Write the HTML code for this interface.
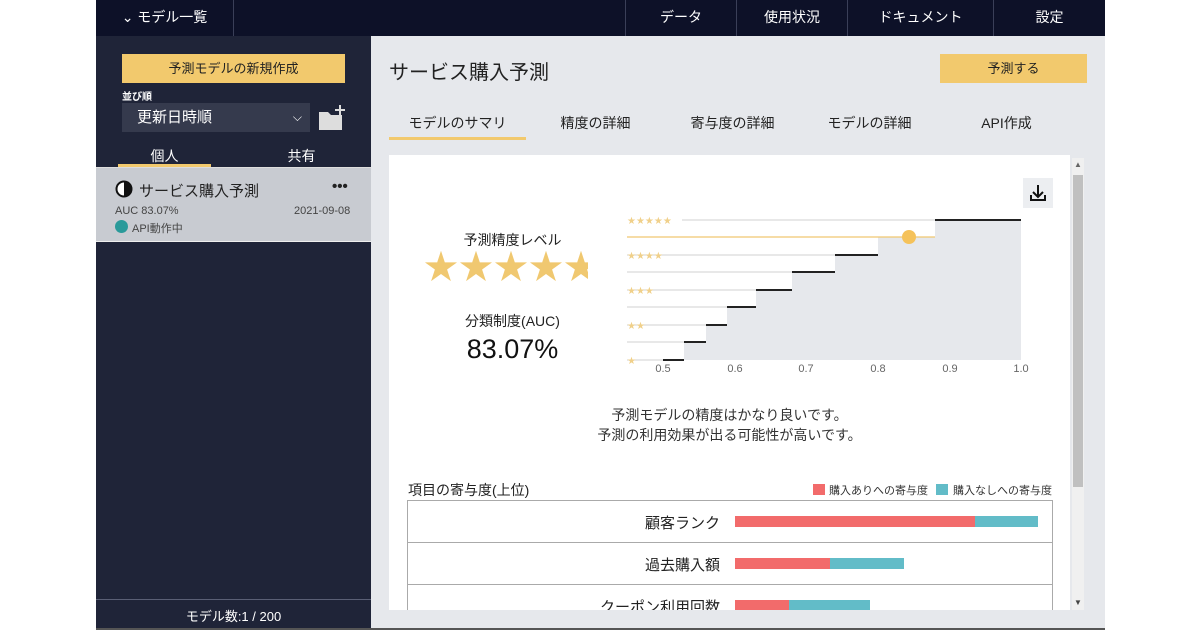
<!DOCTYPE html>
<html><head><meta charset="utf-8"><style>
*{margin:0;padding:0;box-sizing:border-box}
body{width:1200px;height:630px;background:#fff;font-family:"Liberation Sans","Noto Sans CJK JP",sans-serif;position:relative;overflow:hidden;color:#222}
.a{position:absolute}
.top{left:96px;top:0;width:1009px;height:36px;background:#0d1128}
.nav{top:0;height:36px;color:#fff;font-size:14px;line-height:34px;text-align:center;border-left:1px solid #3a3f58}
.side{left:96px;top:36px;width:275px;height:592px;background:#1f2438}
.main{left:371px;top:36px;width:734px;height:592px;background:#e6e8ec}
.btn{background:#f2c96d;color:#222;font-size:13px;text-align:center}
.tab{top:113px;font-size:14px;color:#222;text-align:center}
.card{left:389px;top:155px;width:681px;height:455px;background:#fff}
</style></head><body>
<div class="a top"></div>
<div class="a nav" style="left:96px;width:138px;border-left:none;border-right:1px solid #3a3f58;font-size:14px">⌄ モデル一覧</div>
<div class="a nav" style="left:625px;width:111px">データ</div>
<div class="a nav" style="left:736px;width:111px">使用状況</div>
<div class="a nav" style="left:847px;width:146px">ドキュメント</div>
<div class="a nav" style="left:993px;width:112px">設定</div>

<div class="a side"></div>
<div class="a btn" style="left:122px;top:54px;width:223px;height:29px;line-height:29px">予測モデルの新規作成</div>
<div class="a" style="left:122px;top:88px;color:#fff;font-size:10px;font-weight:bold">並び順</div>
<div class="a" style="left:122px;top:103px;width:188px;height:29px;background:#353a4d;color:#fff;font-size:15px;line-height:29px;padding-left:15px">更新日時順<span style="position:absolute;right:8px;top:0;font-size:12px">⌵</span></div>
<svg class="a" style="left:318px;top:104px" width="30" height="28"><path d="M1 8h9l3 3h11v15H1z" fill="#ddd"/><path d="M22 1v10M17 6h10" stroke="#ddd" stroke-width="2"/></svg>
<div class="a" style="left:118px;top:146px;width:93px;text-align:center;color:#fff;font-size:14px">個人</div>
<div class="a" style="left:118px;top:164px;width:93px;height:3px;background:#f2c96d"></div>
<div class="a" style="left:255px;top:146px;width:93px;text-align:center;color:#fff;font-size:14px">共有</div>
<div class="a" style="left:96px;top:167px;width:275px;height:75px;background:#c8cbd1;border-top:1px solid #ddd;border-bottom:1px solid #eee"></div>
<svg class="a" style="left:115px;top:180px" width="18" height="18"><circle cx="9" cy="9" r="7.5" fill="#fff" stroke="#111" stroke-width="2"/><path d="M9 1.5a7.5 7.5 0 0 1 0 15z" fill="#111"/></svg>
<div class="a" style="left:139px;top:180px;font-size:15px;color:#222">サービス購入予測</div>
<div class="a" style="left:332px;top:178px;font-size:15px;font-weight:bold;color:#222">•••</div>
<div class="a" style="left:115px;top:205px;font-size:11px;color:#444">AUC 83.07%</div>
<div class="a" style="left:294px;top:205px;font-size:11px;color:#444">2021-09-08</div>
<div class="a" style="left:115px;top:220px;width:13px;height:13px;border-radius:50%;background:#2a9a9a"></div>
<div class="a" style="left:132px;top:220px;font-size:11px;color:#444">API動作中</div>
<div class="a" style="left:96px;top:599px;width:275px;height:1px;background:#5a5f75"></div>
<div class="a" style="left:96px;top:606px;width:275px;text-align:center;color:#fff;font-size:13px">モデル数:1 / 200</div>

<div class="a main"></div>
<div class="a" style="left:389px;top:56px;font-size:20px;color:#222">サービス購入予測</div>
<div class="a btn" style="left:940px;top:54px;width:147px;height:29px;line-height:29px">予測する</div>
<div class="a tab" style="left:389px;width:137px">モデルのサマリ</div>
<div class="a" style="left:389px;top:137px;width:137px;height:3px;background:#f2c96d"></div>
<div class="a tab" style="left:527px;width:137px">精度の詳細</div>
<div class="a tab" style="left:664px;width:137px">寄与度の詳細</div>
<div class="a tab" style="left:801px;width:137px">モデルの詳細</div>
<div class="a tab" style="left:938px;width:137px">API作成</div>

<div class="a card"></div>
<div class="a" style="left:1072px;top:158px;width:12px;height:452px;background:#f0f0f0"></div>
<div class="a" style="left:1073px;top:175px;width:10px;height:312px;background:#c0c0c0"></div>
<div class="a" style="left:1074px;top:160px;font-size:8px;color:#666">▲</div>
<div class="a" style="left:1074px;top:598px;font-size:8px;color:#444">▼</div>

<div class="a" style="left:1023px;top:178px;width:30px;height:30px;background:#eceef1"></div>
<svg class="a" style="left:1023px;top:178px" width="30" height="30"><path d="M15 7v12M10 14l5 5 5-5M8 17v5h14v-5" fill="none" stroke="#111" stroke-width="2"/></svg>

<div class="a" style="left:420px;top:230px;width:185px;text-align:center;font-size:14px">予測精度レベル</div>
<div class="a" style="left:424px;top:248px;width:164px;overflow:hidden;white-space:nowrap;font-size:34px;color:#f0c870;letter-spacing:1px;line-height:40px">★★★★★</div>
<div class="a" style="left:420px;top:311px;width:185px;text-align:center;font-size:14px">分類制度(AUC)</div>
<div class="a" style="left:420px;top:334px;width:185px;text-align:center;font-size:27px;color:#111">83.07%</div>

<svg class="a" style="left:600px;top:200px" width="440" height="180" font-family="Liberation Sans" >
<path d="M63 160V160H84V142H106V125H127V107H156V90H192V72H235V55H278V37H335V20H421V160z" fill="#e6e8ec"/>
<g stroke="#d0d0d0" stroke-width="1">
<path d="M82 20H335M27 55H235M27 72H192M27 90H156M27 107H127M27 125H106M27 142H84M27 160H63"/>
</g>
<path d="M27 37H335" stroke="#f0c870" stroke-width="1.2"/>
<g stroke="#222" stroke-width="2">
<path d="M63 160H84M84 142H106M106 125H127M127 107H156M156 90H192M192 72H235M235 55H278M335 20H421"/>
</g>
<circle cx="309" cy="37" r="7" fill="#f5c25a"/>
<g fill="#f0d08a" font-size="10"><text x="27" y="24">★★★★★</text><text x="27" y="59">★★★★</text><text x="27" y="94">★★★</text><text x="27" y="129">★★</text><text x="27" y="164">★</text></g>
<g fill="#666" font-size="11" text-anchor="middle"><text x="63" y="172">0.5</text><text x="135" y="172">0.6</text><text x="206" y="172">0.7</text><text x="278" y="172">0.8</text><text x="350" y="172">0.9</text><text x="421" y="172">1.0</text></g>
</svg>

<div class="a" style="left:389px;top:405px;width:681px;text-align:center;font-size:14px;line-height:20px;color:#333">予測モデルの精度はかなり良いです。<br>予測の利用効果が出る可能性が高いです。</div>

<div class="a" style="left:408px;top:480px;font-size:14px">項目の寄与度(上位)</div>
<div class="a" style="left:813px;top:484px;width:12px;height:11px;background:#f26b6b"></div>
<div class="a" style="left:829px;top:482px;font-size:11px;color:#333">購入ありへの寄与度</div>
<div class="a" style="left:936px;top:484px;width:12px;height:11px;background:#62bcc8"></div>
<div class="a" style="left:953px;top:482px;font-size:11px;color:#333">購入なしへの寄与度</div>

<div class="a" style="left:407px;top:500px;width:646px;height:110px;border:1px solid #aaa;border-bottom:none"></div>
<div class="a" style="left:407px;top:542px;width:646px;height:1px;background:#aaa"></div>
<div class="a" style="left:407px;top:584px;width:646px;height:1px;background:#aaa"></div>
<div class="a" style="left:408px;top:512px;width:312px;text-align:right;font-size:15px">顧客ランク</div>
<div class="a" style="left:408px;top:554px;width:312px;text-align:right;font-size:15px">過去購入額</div>
<div class="a" style="left:408px;top:596px;width:312px;text-align:right;font-size:15px">クーポン利用回数</div>
<div class="a" style="left:735px;top:516px;width:240px;height:11px;background:#f26b6b"></div>
<div class="a" style="left:975px;top:516px;width:63px;height:11px;background:#62bcc8"></div>
<div class="a" style="left:735px;top:558px;width:95px;height:11px;background:#f26b6b"></div>
<div class="a" style="left:830px;top:558px;width:74px;height:11px;background:#62bcc8"></div>
<div class="a" style="left:735px;top:600px;width:54px;height:10px;background:#f26b6b"></div>
<div class="a" style="left:789px;top:600px;width:81px;height:10px;background:#62bcc8"></div>
<div class="a" style="left:371px;top:610px;width:734px;height:18px;background:#e6e8ec"></div>
<div class="a" style="left:96px;top:628px;width:1009px;height:2px;background:#555"></div>
</body></html>
